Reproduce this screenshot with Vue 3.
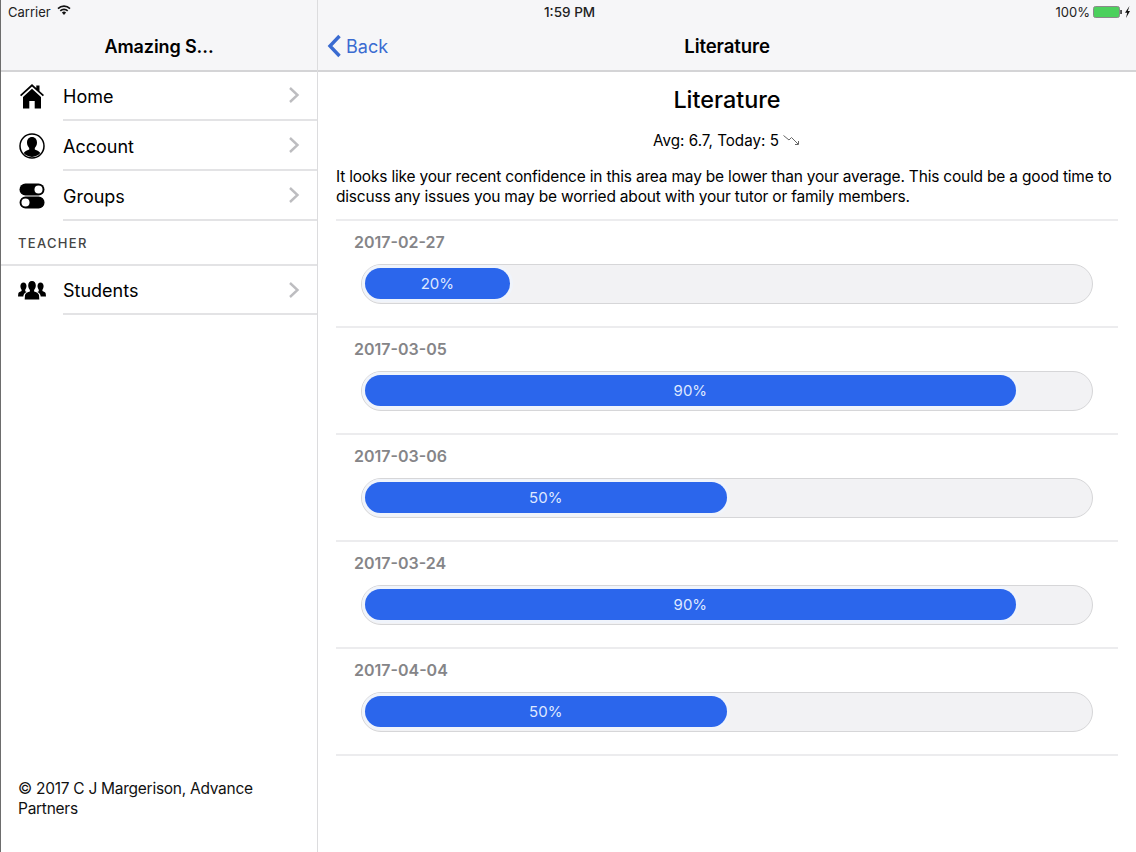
<script setup>
const menu = [
  { label: 'Home', icon: 'home' },
  { label: 'Account', icon: 'account' },
  { label: 'Groups', icon: 'groups' },
]
const entries = [
  { date: '2017-02-27', pct: 20 },
  { date: '2017-03-05', pct: 90 },
  { date: '2017-03-06', pct: 50 },
  { date: '2017-03-24', pct: 90 },
  { date: '2017-04-04', pct: 50 },
]
</script>

<template>
  <div class="screen">
    <aside class="side">
      <header class="bar side-bar">
        <div class="status"><span>Carrier</span>
          <svg class="wifi" width="14" height="10" viewBox="0 0 14 10"><path d="M7 10 4.900 7.600a3 3 0 0 1 4.200 0Z" fill="#111"/><path d="M3.300 5.900a5.200 5.200 0 0 1 7.400 0M1 3.600a8.500 8.500 0 0 1 12 0" fill="none" stroke="#111" stroke-width="1.600"/></svg>
        </div>
        <div class="nav-row"><h1 class="nav-title">Amazing S...</h1></div>
      </header>
      <ul class="list first-list">
        <li v-for="m in menu" :key="m.label" class="row">
          <span class="ico">
            <svg v-if="m.icon === 'home'" width="26" height="26" viewBox="0 0 26 26">
              <path d="M13 1 1 12l1.200 1.300L13 3.500l10.800 9.800L25 12l-4.500-4.100V2.500h-3.200v2.500Z" fill="#000"/>
              <path d="M4 14 13 5.800 22 14v11.500h-6.300v-7.500h-5.400v7.500H4Z" fill="#000"/>
            </svg>
            <svg v-else-if="m.icon === 'account'" width="26" height="26" viewBox="0 0 26 26">
              <circle cx="13" cy="13" r="12" fill="#fff" stroke="#000" stroke-width="1.500"/>
              <path d="M13 4c3.200 0 5 2.400 5 5.600 0 2.300-.9 4.200-2.200 5.400v1.600c2.400 1 4.700 2 5.500 3.500a11 11 0 0 1-16.600 0c.8-1.500 3.100-2.500 5.500-3.500V15C8.900 13.800 8 11.900 8 9.600 8 6.400 9.800 4 13 4Z" fill="#000"/>
            </svg>
            <svg v-else width="26" height="26" viewBox="0 0 26 26">
              <rect x="0.500" y="0.500" width="25" height="12" rx="6" fill="#000"/>
              <circle cx="19.500" cy="6.500" r="4" fill="#fff"/>
              <rect x="1.300" y="14.300" width="23.500" height="10.500" rx="5.250" fill="#000" stroke="#000" stroke-width="1.500"/>
              <circle cx="6.500" cy="19.500" r="4" fill="#fff"/>
            </svg>
          </span>
          <span class="label">{{ m.label }}</span>
          <svg class="chev" width="12" height="18" viewBox="0 0 12 18"><path d="M2 2l7.500 7L2 16" fill="none" stroke="#bdbdc0" stroke-width="2.400"/></svg>
        </li>
      </ul>
      <div class="section">TEACHER</div>
      <ul class="list top-line">
        <li class="row row-tight">
          <span class="ico">
            <svg width="28" height="19" viewBox="0 0 28 19">
              <path d="M14 0c2.500 0 3.800 1.900 3.800 4.600 0 1.800-.7 3.400-1.700 4.500v1.500c2.200.8 4.400 1.600 4.900 3.300l.3 4.600H6.700l.3-4.600c.5-1.700 2.700-2.500 4.900-3.300V9.100c-1-1.100-1.700-2.700-1.700-4.500C10.200 1.900 11.500 0 14 0Z" fill="#000"/>
              <path d="M5.500 1.500c1.800 0 3 1.500 3 3.600 0 1.500-.6 2.800-1.300 3.700v1.400l1.500.7C6.600 11.600 5.400 13 5.300 15.500H0l.3-3c.4-1.200 1.900-1.800 3.300-2.400V8.800C2.900 7.900 2.400 6.600 2.400 5.100c0-2.100 1.300-3.600 3.100-3.600Z" fill="#000"/>
              <path d="M22.500 1.500c-1.800 0-3 1.500-3 3.600 0 1.500.6 2.800 1.300 3.700v1.400l-1.500.7c2.100.7 3.300 2.100 3.400 4.600H28l-.3-3c-.4-1.200-1.900-1.800-3.300-2.400V8.800c.7-.9 1.200-2.200 1.200-3.700 0-2.100-1.300-3.600-3.100-3.600Z" fill="#000"/>
            </svg>
          </span>
          <span class="label">Students</span>
          <svg class="chev" width="12" height="18" viewBox="0 0 12 18"><path d="M2 2l7.500 7L2 16" fill="none" stroke="#bdbdc0" stroke-width="2.400"/></svg>
        </li>
      </ul>
      <footer class="foot">© 2017 C J Margerison, Advance Partners</footer>
    </aside>

    <main class="main">
      <header class="bar">
        <div class="status status-main">
          <span class="clock">1:59 PM</span>
          <span class="batt">
            <span>100%</span>
            <svg width="38" height="12" viewBox="0 0 38 12">
              <rect x="0.500" y="0.500" width="26" height="11" rx="2" fill="#4cd05d" stroke="#8a8a8a"/>
              <rect x="27.300" y="4" width="1.500" height="4" fill="#222"/>
              <path d="M36.500 0 32 6.700h2.200L33 12l4-7h-2.200Z" fill="#111"/>
            </svg>
          </span>
        </div>
        <div class="nav-row nav-main">
          <span class="back">
            <svg width="15" height="24" viewBox="0 0 15 24"><path d="M12.500 2 3 12l9.500 10" fill="none" stroke="#3a6bd1" stroke-width="3.400"/></svg>
            Back
          </span>
          <h1 class="nav-title nav-title-main">Literature</h1>
        </div>
      </header>
      <section class="content">
        <h2 class="title">Literature</h2>
        <p class="avg">Avg: 6.7, Today: 5
          <svg width="18" height="12" viewBox="0 0 18 12"><path d="M0.500 1.500 6 6l2.500-2.500L15 10M12 10.500h3.500V7" fill="none" stroke="#666" stroke-width="1"/></svg>
        </p>
        <p class="msg">It looks like your recent confidence in this area may be lower than your average. This could be a good time to discuss any issues you may be worried about with your tutor or family members.</p>
        <div v-for="e in entries" :key="e.date" class="entry">
          <div class="date">{{ e.date }}</div>
          <div class="track">
            <div class="fill" :style="{ width: e.pct + '%' }">{{ e.pct }}%</div>
          </div>
        </div>
      </section>
    </main>
  </div>
</template>

<style scoped>
.screen {
  width: 1136px;
  height: 852px;
  display: flex;
  overflow: hidden;
  background: #fff;
  color: #000;
  font-family: Inter, "Liberation Sans", sans-serif;
}
.side {
  width: 318px;
  flex: none;
  box-sizing: border-box;
  border-left: 1px solid #6d6d6d;
  border-right: 1px solid #dcdcde;
  display: flex;
  flex-direction: column;
}
.main { flex: 1; min-width: 0; }
.bar {
  height: 72px;
  box-sizing: border-box;
  background: #f6f6f8;
  border-bottom: 2px solid #d4d4d6;
}
.status {
  height: 23px;
  padding-left: 7px;
  display: flex;
  align-items: center;
  gap: 6px;
  font-size: 13px;
  color: #222;
}
.wifi { margin-top: -3px; }
.status-main {
  position: relative;
  justify-content: flex-end;
  padding: 0 5px 0 0;
}
.clock {
  position: absolute;
  left: 226px;
  font-size: 13.500px;
  font-weight: 500;
}
.batt { display: flex; align-items: center; gap: 3px; }
.nav-row {
  height: 46px;
  display: flex;
  align-items: center;
  justify-content: center;
}
.nav-main { position: relative; }
.nav-title {
  margin: 0;
  font-size: 18px;
  font-weight: 600;
  letter-spacing: -0.1px;
}
.nav-title-main { font-size: 18.600px; }
.back {
  position: absolute;
  left: 9px;
  top: 11px;
  display: flex;
  align-items: center;
  gap: 4px;
  font-size: 18px;
  color: #3a6bd1;
}
.list { list-style: none; margin: 0; padding: 0; }
.first-list { margin-top: -1px; }
.top-line { border-top: 2px solid #e3e3e5; }
.row {
  height: 50px;
  box-sizing: border-box;
  display: flex;
  align-items: center;
  padding-left: 17px;
  position: relative;
}
.row-tight { height: 49px; }
.row::after {
  content: "";
  position: absolute;
  left: 62px;
  right: 0;
  bottom: 0;
  height: 2px;
  background: #e3e3e5;
}
.ico {
  width: 28px;
  height: 28px;
  display: flex;
  align-items: center;
  justify-content: center;
  margin-right: 17px;
}
.label { flex: 1; font-size: 18px; }
.chev { margin: -2px 17px 0 0; }
.section {
  height: 43px;
  display: flex;
  align-items: center;
  padding-left: 17px;
  font-size: 13px;
  font-weight: 500;
  letter-spacing: 1.300px;
  color: #444;
}
.foot {
  margin-top: auto;
  padding: 0 40px 33px 17px;
  font-size: 15.500px;
  letter-spacing: -0.270px;
  line-height: 20px;
  color: #111;
}
.content { padding: 0 18px; }
.title {
  margin: 13px 0 0;
  text-align: center;
  font-size: 23.400px;
  font-weight: 500;
  line-height: 30px;
}
.avg {
  margin: 13px 0 0;
  height: 24px;
  display: flex;
  align-items: center;
  justify-content: center;
  gap: 4px;
  font-size: 15.200px;
}
.msg {
  margin: 15px 0 0;
  padding-bottom: 12px;
  font-size: 15.500px;
  letter-spacing: -0.200px;
  line-height: 20px;
  border-bottom: 2px solid #ececee;
}
.entry {
  height: 107px;
  box-sizing: border-box;
  padding: 11px 0 0 18px;
  border-bottom: 2px solid #ececee;
}
.date {
  font-size: 16px;
  line-height: 20px;
  font-weight: 600;
  color: #858588;
}
.track {
  margin: 12px 0 0 7px;
  width: 732px;
  height: 40px;
  box-sizing: border-box;
  padding: 3px 4px 4px 3px;
  border: 1px solid #d6d6d8;
  border-radius: 20px;
  background: #f2f2f4;
}
.fill {
  height: 100%;
  display: flex;
  align-items: center;
  justify-content: center;
  background: #2b66ec;
  border-radius: 16px;
  box-shadow: 0 0 0 3px #f0f4fb;
  color: #dfe8ff;
  font-size: 15px;
}
</style>
